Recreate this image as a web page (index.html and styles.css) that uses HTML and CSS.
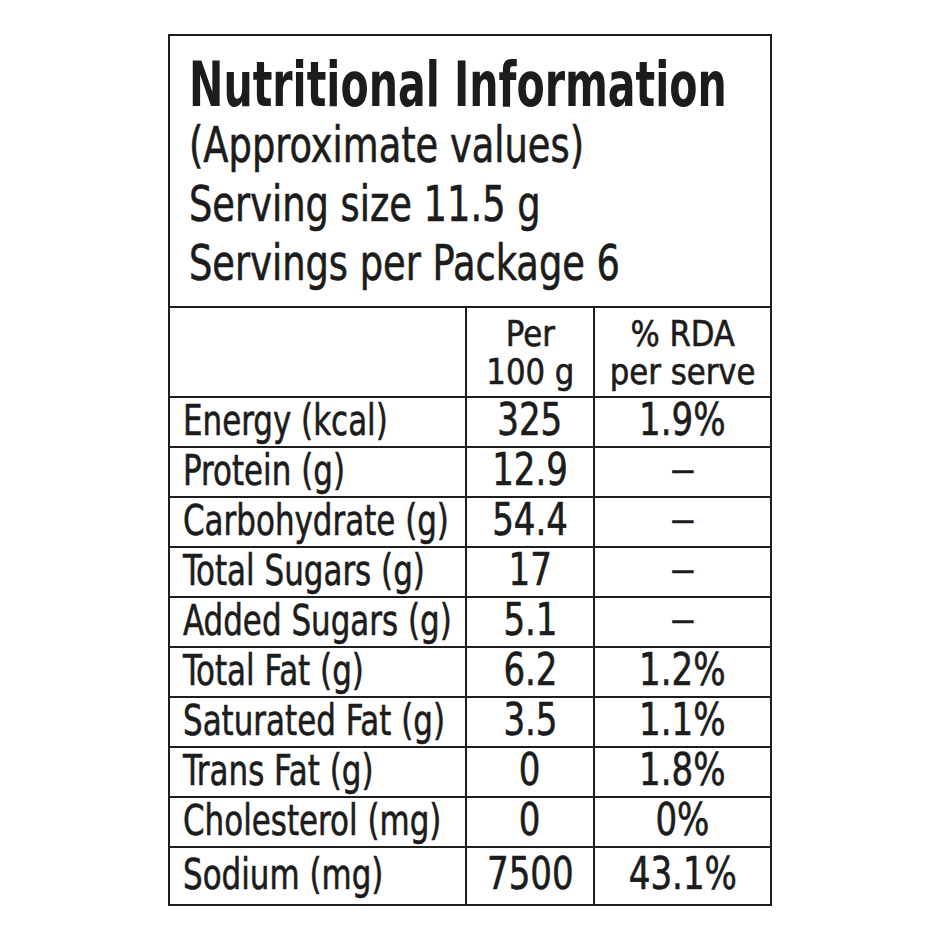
FILE: index.html
```html
<!DOCTYPE html>
<html lang="en">
<head>
<meta charset="utf-8">
<title>Nutritional Information</title>
<link rel="stylesheet" href="styles.css">
</head>
<body>
<div class="label">
  <div class="head">
    <div class="title"><span class="t">Nutritional Information</span></div>
    <div class="sub"><span class="t">(Approximate values)</span></div>
    <div class="sub"><span class="t">Serving size 11.5 g</span></div>
    <div class="sub"><span class="t">Servings per Package 6</span></div>
  </div>
  <div class="grid">
    <div class="cell th"></div>
    <div class="cell th"><span class="t">Per<br>100 g</span></div>
    <div class="cell th last"><span class="t">% RDA<br>per serve</span></div>

    <div class="cell name"><span class="t">Energy (kcal)</span></div><div class="cell val"><span class="t">325</span></div><div class="cell val last"><span class="t">1.9%</span></div>
    <div class="cell name"><span class="t">Protein (g)</span></div><div class="cell val"><span class="t">12.9</span></div><div class="cell val last"><span class="t dash">–</span></div>
    <div class="cell name"><span class="t">Carbohydrate (g)</span></div><div class="cell val"><span class="t">54.4</span></div><div class="cell val last"><span class="t dash">–</span></div>
    <div class="cell name"><span class="t">Total Sugars (g)</span></div><div class="cell val"><span class="t">17</span></div><div class="cell val last"><span class="t dash">–</span></div>
    <div class="cell name"><span class="t">Added Sugars (g)</span></div><div class="cell val"><span class="t">5.1</span></div><div class="cell val last"><span class="t dash">–</span></div>
    <div class="cell name"><span class="t">Total Fat (g)</span></div><div class="cell val"><span class="t">6.2</span></div><div class="cell val last"><span class="t">1.2%</span></div>
    <div class="cell name"><span class="t">Saturated Fat (g)</span></div><div class="cell val"><span class="t">3.5</span></div><div class="cell val last"><span class="t">1.1%</span></div>
    <div class="cell name"><span class="t">Trans Fat (g)</span></div><div class="cell val"><span class="t">0</span></div><div class="cell val last"><span class="t">1.8%</span></div>
    <div class="cell name"><span class="t">Cholesterol (mg)</span></div><div class="cell val"><span class="t">0</span></div><div class="cell val last"><span class="t">0%</span></div>
    <div class="cell name end"><span class="t">Sodium (mg)</span></div><div class="cell val end"><span class="t">7500</span></div><div class="cell val last end"><span class="t">43.1%</span></div>
  </div>
</div>
</body>
</html>
```
FILE: styles.css
```css
html, body {
  margin: 0;
  padding: 0;
  background: #ffffff;
}
body {
  font-family: "DejaVu Sans Condensed", "Liberation Sans Narrow", "Liberation Sans", sans-serif;
  color: #1c1c1c;
  padding: 34px 0 0 168px;
}
.label {
  width: 600px;
  border: 2px solid #1e1e1e;
}
.t {
  display: inline-block;
  white-space: nowrap;
  transform-origin: left center;
  -webkit-text-stroke: 0.6px #1c1c1c;
}
.head {
  padding: 18px 0 13px 19px;
  border-bottom: 2px solid #1e1e1e;
}
.title {
  font-weight: 700;
  font-size: 62px;
  line-height: 62px;
  height: 62px;
  white-space: nowrap;
}
.title .t {
  transform: scaleX(0.737);
  -webkit-text-stroke: 0;
}
.sub {
  font-size: 49px;
  line-height: 59px;
  height: 59px;
  white-space: nowrap;
}
.sub .t {
  transform: scaleX(0.835);
}
.grid {
  display: grid;
  grid-template-columns: 297px 128px 175px;
}
.cell {
  border-right: 2px solid #1e1e1e;
  border-bottom: 2px solid #1e1e1e;
  height: 44px;
  line-height: 44px;
  padding-bottom: 4px;
  white-space: nowrap;
}
.cell.last {
  border-right: none;
}
.cell.end {
  border-bottom: none;
  height: 52px;
  line-height: 52px;
}
.th {
  height: 81px;
  padding: 7px 0 0 0;
  font-size: 36px;
  line-height: 38px;
  text-align: center;
}
.th .t {
  transform-origin: center center;
  transform: scaleX(0.95);
}
.name {
  font-size: 43px;
  padding-left: 13px;
}
.name .t {
  transform: scaleX(0.80);
}
.val {
  font-size: 44px;
  text-align: center;
}
.val .t {
  transform-origin: center center;
  transform: scaleX(0.86);
}
.val .t.dash {
  transform: scaleX(1.3) scaleY(0.8);
}
```
